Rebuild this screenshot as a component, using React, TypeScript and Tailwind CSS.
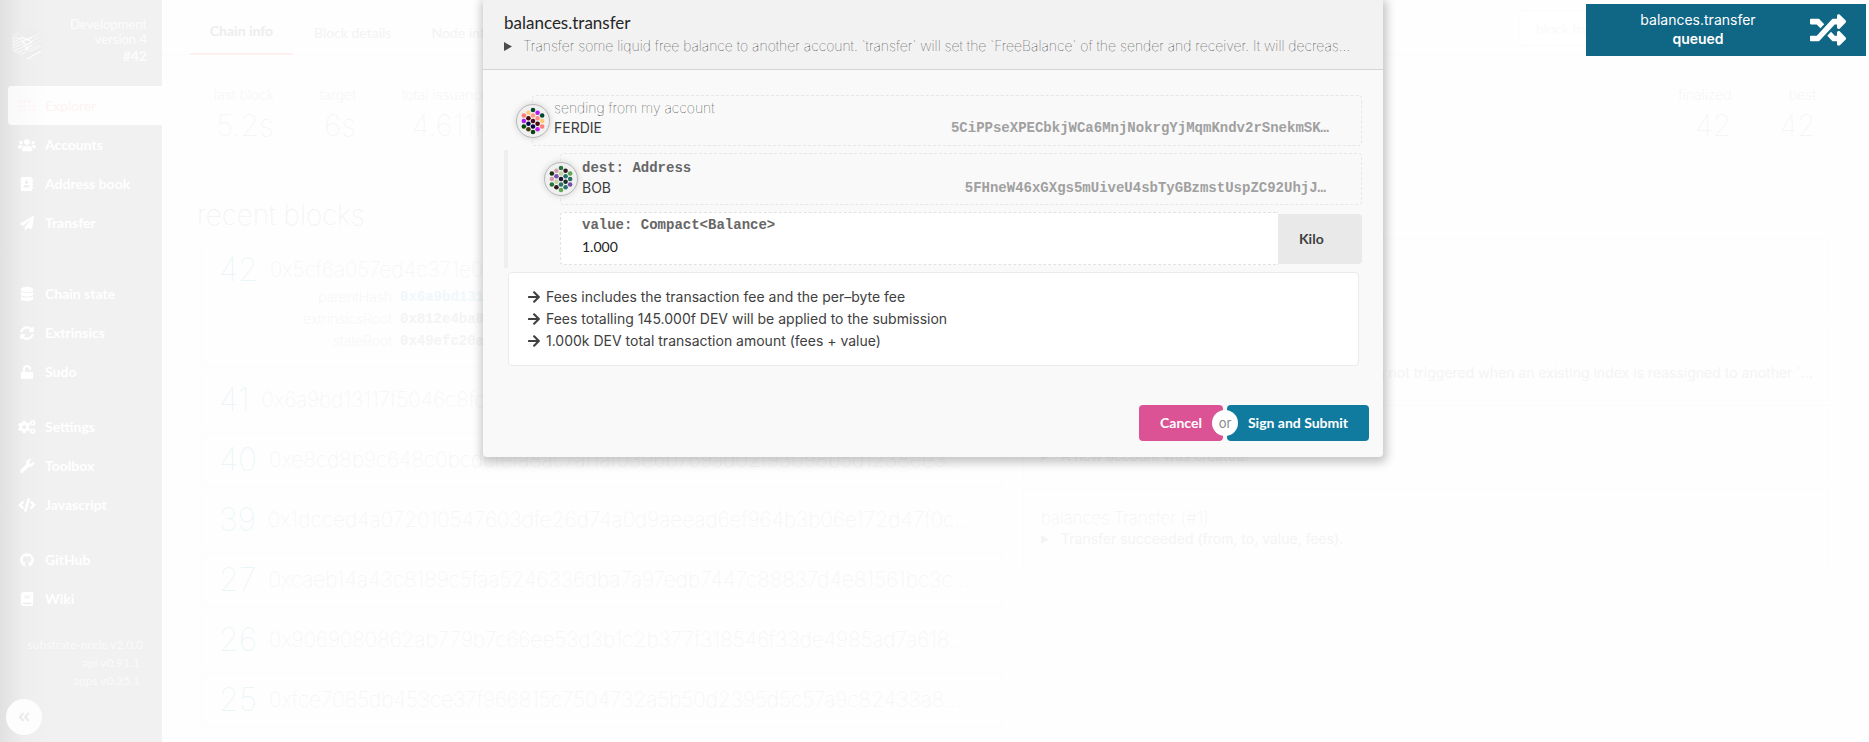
import React from "react";
import {
  FaUsers,
  FaAddressBook,
  FaPaperPlane,
  FaDatabase,
  FaSyncAlt,
  FaUnlock,
  FaCogs,
  FaWrench,
  FaCode,
  FaGithub,
  FaBook,
  FaRandom,
  FaArrowRight,
  FaAngleDoubleLeft,
} from "react-icons/fa";

type IconType = React.ComponentType<{ className?: string }>;

function BrailleIcon({ className }: { className?: string }) {
  const cols = [2, 7, 13, 18];
  return (
    <svg viewBox="0 0 20 14" className={className} fill="currentColor" aria-hidden="true">
      {cols.map((x, c) =>
        [2, 7, 12].map((y, r) => {
          const big = (c < 2 && r === 0) || (r === 1 && c === 0) || (c === 2 && r === 0);
          return <circle key={`${c}-${r}`} cx={x} cy={y} r={big ? 1.8 : 1} />;
        })
      )}
    </svg>
  );
}

function HexLogo() {
  return (
    <svg viewBox="0 0 32 36" className="h-9 w-8 shrink-0" aria-hidden="true">
      <path d="M16 1 31 9.5v17L16 35 1 26.5v-17z" fill="#ededed" />
      <g stroke="#fdfdfd" fill="none">
        <path
          d="M2 14l3-2 2 2 4-2M2 17l10-4M2 20l11-5M2 23l9-4M3 26l11-5M6 28l10-5M9 30l20-11M20 13l9-5M20 17l10-6M20 21l10-6M18 27l12-6"
          strokeWidth="0.9"
          strokeDasharray="2 0.5"
        />
        <path d="M11 12l5 3 5-3M11 17l5-3 5 3-5 3-5-3M12 20l5 3 4-3M14 25l4-2M16 34l14-8" strokeWidth="1.2" />
      </g>
    </svg>
  );
}

const menu: { label: string; icon: IconType; wide?: boolean; gap?: string; active?: boolean }[] = [
  { label: "Explorer", icon: BrailleIcon, wide: true, active: true },
  { label: "Accounts", icon: FaUsers, wide: true },
  { label: "Address book", icon: FaAddressBook },
  { label: "Transfer", icon: FaPaperPlane },
  { label: "Chain state", icon: FaDatabase, gap: "mt-8" },
  { label: "Extrinsics", icon: FaSyncAlt },
  { label: "Sudo", icon: FaUnlock },
  { label: "Settings", icon: FaCogs, wide: true, gap: "mt-4" },
  { label: "Toolbox", icon: FaWrench },
  { label: "Javascript", icon: FaCode, wide: true },
  { label: "GitHub", icon: FaGithub, gap: "mt-4" },
  { label: "Wiki", icon: FaBook },
];

function Sidebar() {
  return (
    <aside className="flex w-[162px] shrink-0 flex-col bg-linear-to-r from-[#e1e1e1] via-[#eeeeee] via-[24px] to-[#f1f1f1] to-[52px] font-['Lato',sans-serif] text-white">
      <div className="flex h-[86px] items-center justify-between pr-[15px] pl-[11px]">
        <HexLogo />
        <div className="pb-1 text-right text-[13px] leading-[15px] text-[#fcfcfc]">
          <div>Development</div>
          <div>version 4</div>
          <div className="text-sm leading-[18px] font-bold">#42</div>
        </div>
      </div>
      <nav className="flex flex-col pl-2">
        {menu.map(({ label, icon: Icon, wide, gap, active }) => (
          <a
            key={label}
            href="#"
            className={`flex h-[39px] items-center gap-[9px] rounded-l pl-[10px] text-sm ${gap ?? ""} ${
              active ? "bg-linear-to-r from-[#f9f9f9] to-[#fefefe] to-[40px] text-[#fdf3f3]" : "font-bold text-white"
            }`}
          >
            <span className="flex w-[18px] justify-center">
              <Icon className={wide ? "h-[14px] w-[18px]" : "size-[14px]"} />
            </span>
            {label}
          </a>
        ))}
      </nav>
      <div className="mt-[18px] flex flex-col items-end pr-[22px] text-xs leading-[18px] text-[#fafafa]">
        <span className="-mr-[3px]">substrate-node v2.0.0</span>
        <span>api v0.91.1</span>
        <span>apps v0.35.1</span>
      </div>
      <button
        aria-label="Collapse sidebar"
        className="mt-[9px] ml-[6px] flex size-9 shrink-0 items-center justify-center rounded-full bg-[#fdfdfd] text-[#ececec]"
      >
        <FaAngleDoubleLeft className="size-[14px]" />
      </button>
    </aside>
  );
}

function Summary({ label, value }: { label: string; value: string }) {
  return (
    <div className="text-right text-[#f4f4f4]">
      <div className="text-sm leading-5 font-extralight">{label}</div>
      <div className="mt-[2px] text-3xl leading-9 font-thin">{value}</div>
    </div>
  );
}

const blocks = [
  ["41", "0x6a9bd13117f5046c8fd19ae3b5e27cc09d41f76e2b8a3c5d10e94f7b…"],
  ["40", "0xe8cd8b9c648c0bcdcfefa8ac7af1af03e6b769ad02f93098b5d1238ee3…"],
  ["39", "0x1dcced4a072010547603dfe26d74a0d9aeead6ef964b3b06e172d47f0c…"],
  ["27", "0xcaeb14a43c8189c5faa5246336dba7a97edb7447c88837d4e81561bc3c…"],
  ["26", "0x9069080862ab779b7c66ee53d3b1c2b377f318546f33de4985ad7a618…"],
  ["25", "0xfce7085db453ce37f966815c7504732a5b50d2395d5c57a9c82433a8…"],
];

const roots = [
  ["parentHash", "0x6a9bd13117f5", "text-[#f0f8fa]"],
  ["extrinsicsRoot", "0x812e4ba87c05", "text-[#f4f4f4]"],
  ["stateRoot", "0x49efc20ab6d3", "text-[#f4f4f4]"],
];

const events = [
  ["system.ExtrinsicSuccess (#0)", "An extrinsic completed successfully."],
  [
    "indices.NewAccountIndex (#1)",
    "A new account index was assigned. This event is not triggered when an existing index is reassigned to another `…",
  ],
  ["balances.NewAccount (#1)", "A new account was created."],
  ["balances.Transfer (#1)", "Transfer succeeded (from, to, value, fees)."],
];

function BlockTitle({ id, hash }: { id: string; hash: string }) {
  return (
    <div className="flex items-center gap-3 leading-8 font-thin whitespace-nowrap">
      <a href="#" className="text-[32px] text-[#e8f4f7]">
        {id}
      </a>
      <span className="text-[21px] text-[#f2f2f2]">{hash}</span>
    </div>
  );
}

function Explorer() {
  return (
    <main className="min-w-0 flex-1 bg-[#fefefe]">
      <div className="flex h-[55px] justify-between border-b border-[#fbfbfb] pl-7">
        <nav className="flex font-['Lato',sans-serif] text-sm text-[#f3f3f3]">
          <a
            href="#"
            className="flex h-[55px] w-[103px] items-center justify-center border-b-2 border-[#fdf1f2] pt-3 pb-1 font-bold text-[#ededed]"
          >
            Chain info
          </a>
          <a href="#" className="flex items-center pt-3 pr-10 pl-[21px]">
            Block details
          </a>
          <a href="#" className="flex items-center pt-3">
            Node info
          </a>
        </nav>
        <input
          aria-label="block hash or number to query"
          placeholder="block hash or number to query"
          className="mt-[10px] mr-[70px] h-9 w-[280px] rounded border border-[#fcfcfc] bg-white px-4 font-['Lato',sans-serif] text-sm placeholder:text-[#fafafa]"
        />
      </div>
      <div className="flex justify-between pt-[30px] pr-[53px] pl-[52px]">
        <div className="flex gap-[46px]">
          <Summary label="last block" value="5.2s" />
          <Summary label="target" value="6s" />
          <Summary label="total issuance" value="4.611k" />
        </div>
        <div className="flex gap-12">
          <Summary label="finalized" value="42" />
          <Summary label="best" value="42" />
        </div>
      </div>
      <div className="mt-[52px] flex gap-5 pr-10 pl-[35px]">
        <section className="min-w-0 flex-1">
          <h1 className="text-[28px] leading-10 font-thin text-[#f0f0f0]">recent blocks</h1>
          <div className="mt-2 ml-1 border border-[#fcfcfc] px-[17px] pt-[10px] pb-[15px]">
            <BlockTitle id="42" hash="0x5cf6a057ed4c371e0a92d6cb" />
            <div className="flex flex-col text-sm leading-[22px]">
              {roots.map(([k, v, c]) => (
                <div key={k} className="flex gap-2">
                  <span className="w-[173px] text-right font-extralight text-[#f5f5f5]">{k}</span>
                  <span className={`font-['Liberation_Mono',monospace] font-bold ${c}`}>{v}</span>
                </div>
              ))}
            </div>
          </div>
          {blocks.map(([id, hash]) => (
            <div key={id} className="mt-1 ml-1 flex h-14 items-center border border-[#fcfcfc] px-[17px]">
              <BlockTitle id={id} hash={hash} />
            </div>
          ))}
        </section>
        <section className="min-w-0 flex-1">
          <h1 className="text-[28px] leading-10 font-thin text-[#f0f0f0]">recent events</h1>
          <div className="mt-1 flex flex-col gap-1">
            {events.map(([title, text]) => (
              <div key={title} className="h-[79px] border border-[#fcfcfc] px-[17px] pt-[18px]">
                <div className="text-[17px] leading-[22px] font-thin text-[#efefef]">{title}</div>
                <div className="flex items-center gap-3 text-sm leading-5 whitespace-nowrap text-[#f4f4f4]">
                  <svg viewBox="0 0 8 9" className="h-[9px] w-2 shrink-0" fill="currentColor" aria-hidden="true">
                    <path d="M0 0 8 4.500 0 9z" />
                  </svg>
                  {text}
                </div>
              </div>
            ))}
          </div>
        </section>
      </div>
    </main>
  );
}

const dots = [
  [16, 5.5], [11, 8.5], [21, 8.5], [6, 11.5], [16, 11.5], [26, 11.5], [11, 14.5], [21, 14.5],
  [6, 17.5], [16, 17.5], [26, 17.5], [11, 20.5], [21, 20.5], [6, 23.5], [16, 23.5], [26, 23.5],
  [11, 26.5], [21, 26.5], [16, 29.5],
];

const ferdie = [
  "#00462f", "#ffc87b", "#b01af0", "#ff7b7b", "#ff9f80", "#00462f", "#4a0808", "#ff9080",
  "#b01af0", "#4a0827", "#ffc87b", "#040848", "#4a0808", "#064610", "#040848", "#ff7b7b",
  "#48380a", "#c01af0", "#064610",
];

const bob = [
  "#27743a", "#d69fb0", "#351620", "#1b3018", "#c3d3a4", "#5ba850", "#7852a8", "#277264",
  "#d69fb0", "#21142e", "#277264", "#c3d3a4", "#1a3028", "#27743a", "#277264", "#7052a8",
  "#351620", "#277264", "#5ba850",
];

function Identicon({ colors }: { colors: string[] }) {
  return (
    <svg
      viewBox="0 0 32 35"
      className="size-[34px] shrink-0 rounded-full border border-[#b8b8b8] bg-[#f0f0f0] shadow-[0_0_6px_#d0d0d0]"
      aria-hidden="true"
    >
      {dots.map(([x, y], i) => (
        <circle key={i} cx={x} cy={y} r="2.5" fill={colors[i]} />
      ))}
    </svg>
  );
}

function AccountRow({ label, mono, name, address, colors, className }: {
  label: string;
  mono?: boolean;
  name: string;
  address: string;
  colors: string[];
  className: string;
}) {
  return (
    <div className={`relative flex flex-col justify-center rounded border border-dashed border-[#e6e6e6] pl-[21px] ${className}`}>
      <div className="absolute top-2 -left-[17px]">
        <Identicon colors={colors} />
      </div>
      <div
        className={
          mono
            ? "font-['Liberation_Mono',monospace] text-sm leading-5 font-bold text-[#666]"
            : "text-sm leading-5 font-thin text-[#222]"
        }
      >
        {label}
      </div>
      <div className="flex justify-between text-sm leading-5">
        <span className="text-[#3c3c3c]">{name}</span>
        <span className="font-['Liberation_Mono',monospace] font-bold text-[#a0a0a0]">{address}</span>
      </div>
    </div>
  );
}

const fees = [
  "Fees includes the transaction fee and the per–byte fee",
  "Fees totalling 145.000f DEV will be applied to the submission",
  "1.000k DEV total transaction amount (fees + value)",
];

function TransferModal() {
  return (
    <div
      role="dialog"
      aria-label="balances.transfer"
      className="w-[900px] rounded-b bg-[#f9f9f9] shadow-[1px_3px_10px_3px_rgba(0,0,0,0.22)]"
    >
      <header className="flex h-[70px] flex-col border-b border-[#d4d4d4] bg-[#f2f2f2] px-[21px] pt-3">
        <h2 className="font-['Lato',sans-serif] text-[17px] leading-[22px] text-[#262626]">balances.transfer</h2>
        <div className="flex items-center gap-[11px] text-sm leading-6 font-thin text-[#222]">
          <svg viewBox="0 0 8 9" className="h-[9px] w-2 shrink-0" fill="#4c4c4c" aria-hidden="true">
            <path d="M0 0 8 4.500 0 9z" />
          </svg>
          <span className="whitespace-nowrap">
            Transfer some liquid free balance to another account. `transfer` will set the `FreeBalance` of the sender and
            receiver. It will decreas…
          </span>
        </div>
      </header>
      <div className="flex flex-col px-[21px] pt-[25px]">
        <AccountRow
          className="ml-7 h-[51px] pr-8 pb-[6px]"
          label="sending from my account"
          name="FERDIE"
          address="5CiPPseXPECbkjWCa6MnjNokrgYjMqmKndv2rSnekmSK…"
          colors={ferdie}
        />
        <div className="mt-1 flex flex-col gap-[7px] border-l-4 border-[#efefef] pt-[3px] pb-[3px] pl-[52px]">
          <AccountRow
            className="h-[52px] pr-[35px] pb-[3px]"
            mono
            label="dest: Address"
            name="BOB"
            address="5FHneW46xGXgs5mUiveU4sbTyGBzmstUspZC92UhjJ…"
            colors={bob}
          />
          <div className="flex h-[53px] items-center">
            <div className="flex flex-1 flex-col self-stretch rounded-l border border-r-0 border-dashed border-[#e2e2e2] bg-white pt-[2px] pl-[21px]">
              <label htmlFor="value" className="font-['Liberation_Mono',monospace] text-sm leading-5 font-bold text-[#666]">
                {"value: Compact<Balance>"}
              </label>
              <input
                id="value"
                defaultValue="1.000"
                className="h-[22px] bg-transparent font-['Lato',sans-serif] text-sm text-[#222] outline-none"
              />
            </div>
            <select
              aria-label="Unit"
              className="h-[50px] w-[84px] appearance-none rounded-r bg-[#e9e9e9] pl-[21px] font-['Lato',sans-serif] text-sm font-bold text-[#404040]"
            >
              <option>Kilo</option>
            </select>
          </div>
        </div>
        <ul className="mt-1 mr-[3px] ml-1 flex h-[94px] flex-col rounded border border-[#ebebeb] bg-white pt-[13px] pl-[19px] text-sm text-[#404040]">
          {fees.map((fee) => (
            <li key={fee} className="flex h-[22px] items-center gap-[6px]">
              <FaArrowRight className="h-[14px] w-3" />
              {fee}
            </li>
          ))}
        </ul>
      </div>
      <footer className="mt-[39px] flex items-center justify-end pr-[14px] pb-4 font-['Lato',sans-serif] text-sm font-bold text-white">
        <button className="h-9 w-[84px] rounded bg-[#db5395] text-center">Cancel</button>
        <span className="z-10 -mx-[11px] flex size-[26px] items-center justify-center rounded-full bg-white font-['Inter',sans-serif] text-[13px] font-normal text-[#888]">
          or
        </span>
        <button className="h-9 w-[142px] rounded bg-[#107b9f] text-center">Sign and Submit</button>
      </footer>
    </div>
  );
}

function Toast() {
  return (
    <div role="status" className="flex h-[52px] w-[280px] items-center bg-[#0f6685] text-white">
      <div className="flex-1 pb-[2px] text-center text-sm leading-[19px]">
        <div>balances.transfer</div>
        <div className="font-semibold">queued</div>
      </div>
      <FaRandom className="mr-5 size-9" />
    </div>
  );
}

export default function App() {
  return (
    <div className="relative flex h-screen overflow-hidden bg-[#fefefe] font-['Inter',sans-serif]">
      <Sidebar />
      <Explorer />
      <div className="absolute inset-x-0 top-0 flex justify-center pr-[3px]">
        <TransferModal />
      </div>
      <div className="absolute top-1 right-[3px]">
        <Toast />
      </div>
    </div>
  );
}
